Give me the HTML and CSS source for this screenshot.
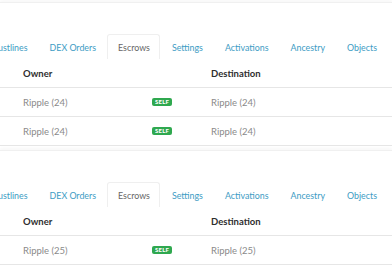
FILE: index.html
```html
<!DOCTYPE html>
<html>
<head>
<meta charset="utf-8">
<link rel="stylesheet" href="styles.css">
</head>
<body>
<div class="page">
  <section class="panel">
    <nav class="tabs">
      <span class="tab">Trustlines</span>
      <span class="tab">DEX Orders</span>
      <span class="tab active">Escrows</span>
      <span class="tab">Settings</span>
      <span class="tab">Activations</span>
      <span class="tab">Ancestry</span>
      <span class="tab">Objects</span>
    </nav>
    <div class="table">
      <div class="row head">
        <span class="c-owner">Owner</span>
        <span class="c-badge"></span>
        <span class="c-dest">Destination</span>
      </div>
      <div class="row">
        <span class="c-owner">Ripple (24)</span>
        <span class="c-badge"><span class="badge">SELF</span></span>
        <span class="c-dest">Ripple (24)</span>
      </div>
      <div class="row">
        <span class="c-owner">Ripple (24)</span>
        <span class="c-badge"><span class="badge">SELF</span></span>
        <span class="c-dest">Ripple (24)</span>
      </div>
    </div>
  </section>
  <section class="panel">
    <nav class="tabs">
      <span class="tab">Trustlines</span>
      <span class="tab">DEX Orders</span>
      <span class="tab active">Escrows</span>
      <span class="tab">Settings</span>
      <span class="tab">Activations</span>
      <span class="tab">Ancestry</span>
      <span class="tab">Objects</span>
    </nav>
    <div class="table">
      <div class="row head">
        <span class="c-owner">Owner</span>
        <span class="c-badge"></span>
        <span class="c-dest">Destination</span>
      </div>
      <div class="row">
        <span class="c-owner">Ripple (25)</span>
        <span class="c-badge"><span class="badge">SELF</span></span>
        <span class="c-dest">Ripple (25)</span>
      </div>
    </div>
  </section>
</div>
</body>
</html>
```
FILE: styles.css
```css
html, body {
  margin: 0;
  padding: 0;
  background: #fff;
  overflow: hidden;
}
body {
  width: 392px;
  height: 272px;
  font-family: Lato, "Open Sans", sans-serif;
  font-size: 9.5px;
}
.page {
  display: flex;
  flex-direction: column;
  overflow: hidden;
}
.panel {
  border-top: 1px solid #f0f0f0;
  box-shadow: 0 -2px 3px rgba(0,0,0,0.03);
  padding-top: 31px;
  margin-top: 2px;
}
.panel + .panel {
  margin-top: 4px;
}
.tabs {
  display: flex;
  margin-left: -21px;
  height: 25px;
  white-space: nowrap;
  font-size: 8.85px;
}
.tab {
  flex-shrink: 0;
  padding: 0 9.5px 0 10.5px;
  display: flex;
  align-items: center;
  color: #3d9cc4;
  border: 1px solid transparent;
  border-bottom: none;
  border-radius: 3px 3px 0 0;
}
.tab.active {
  color: #666;
  border-color: #efefef;
  background: #fff;
}
.table {
  display: flex;
  flex-direction: column;
}
.row {
  display: flex;
  align-items: center;
  height: 28px;
  border-bottom: 1px solid #e6e6e6;
  color: #8a8a8a;
  white-space: nowrap;
}
.row.head {
  color: #2e2e2e;
  font-weight: 700;
}
.c-owner {
  width: 129px;
  padding-left: 23px;
}
.c-badge {
  width: 59px;
  display: flex;
}
.c-dest {
  flex: 1;
}
.badge {
  background: #2fa84f;
  color: #fff;
  font-size: 6px;
  font-weight: 900;
  padding: 1px 3px;
  border-radius: 2px;
  line-height: 6px;
  letter-spacing: 0.2px;
}
```
